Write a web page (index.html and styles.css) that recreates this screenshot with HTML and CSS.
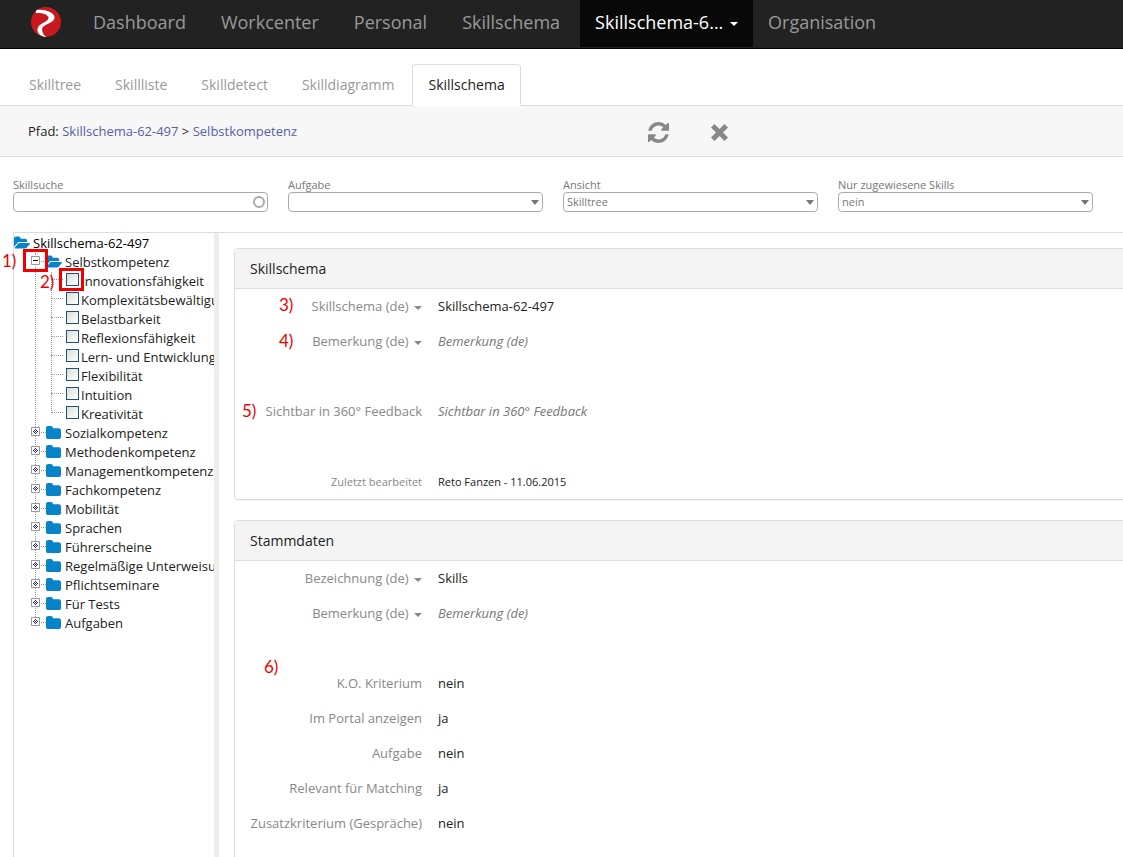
FILE: index.html
```html
<!DOCTYPE html>
<html lang="de">
<head>
    <meta charset="UTF-8">
    <meta name="viewport" content="width=device-width, initial-scale=1.0">
    <title>Skillschema-62-497</title>
    <link rel="stylesheet" href="styles.css">
</head>
<body>
    <!-- Shared icons -->
    <svg class="sprite" aria-hidden="true">
        <symbol id="folder" viewBox="0 128 1664 1408" preserveAspectRatio="none">
            <path d="M1664 608v704q0 92-66 158t-158 66h-1216q-92 0-158-66t-66-158v-960q0-92 66-158t158-66h320q92 0 158 66t66 158v32h672q92 0 158 66t66 158z"/>
        </symbol>
        <symbol id="folder-open" viewBox="0 128 1879 1408">
            <path d="M1879 952q0 31-31 66l-336 396q-43 51-120.500 86.500t-143.500 35.500h-1088q-34 0-60.500-13t-26.500-43q0-31 31-66l336-396q43-51 120.500-86.500t143.500-35.500h1088q34 0 60.500 13t26.500 43zm-343-344v160h-832q-94 0-197 47.500t-164 119.500l-337 396-5 6q0-4-.5-12.500t-.5-12.500v-960q0-92 66-158t158-66h320q92 0 158 66t66 158v32h544q92 0 158 66t66 158z"/>
        </symbol>
        <symbol id="plus" viewBox="0 0 9 9">
            <path fill="#fff" stroke="#999" d="M.5.5h8v8h-8z"/>
            <path fill="#22227a" d="M4 2h1v1H4zM3 3h1v1H3zM5 3h1v1H5zM2 4h1v1H2zM4 4h1v1H4zM6 4h1v1H6zM3 5h1v1H3zM5 5h1v1H5zM4 6h1v1H4z"/>
        </symbol>
        <symbol id="minus" viewBox="0 0 9 9">
            <path fill="#fff" stroke="#999" d="M.5.5h8v8h-8z"/>
            <path fill="#111" d="M2 4h5v1H2z"/>
        </symbol>
    </svg>

    <header class="navbar">
        <a class="brand" href="#" aria-label="Startseite">
            <svg width="30" height="30" viewBox="0 0 30 30">
                <circle cx="15" cy="15" r="15" fill="#c8191e"/>
                <path fill="#fff" d="M5.500 3C13 2 24 5 23.500 11C23 16.500 11.500 17 11 22C11 25 12.500 28 15 30C9 29.500 6 26 6.500 22C7.500 16 17.500 15 17.500 11C17.500 7.500 11 5.500 4.500 6z"/>
            </svg>
        </a>
        <nav class="nav">
            <a href="#">Dashboard</a>
            <a href="#">Workcenter</a>
            <a href="#">Personal</a>
            <a href="#">Skillschema</a>
            <a href="#" class="active">Skillschema-6... <span class="caret"></span></a>
            <a href="#">Organisation</a>
        </nav>
    </header>

    <nav class="tabs">
        <a href="#">Skilltree</a>
        <a href="#">Skillliste</a>
        <a href="#">Skilldetect</a>
        <a href="#">Skilldiagramm</a>
        <a href="#" class="active">Skillschema</a>
    </nav>

    <div class="pathbar">
        <div class="path"><span class="strong">Pfad:</span> <a href="#">Skillschema-62-497</a> &gt; <a href="#">Selbstkompetenz</a></div>
        <div class="actions">
            <button type="button" aria-label="Aktualisieren">
                <svg width="21" height="21" viewBox="0 0 1536 1536"><path d="M1511 928q0 5-1 7-64 268-268 434.500t-478 166.500q-146 0-282.500-55t-243.500-157l-129 129q-19 19-45 19t-45-19-19-45v-448q0-26 19-45t45-19h448q26 0 45 19t19 45-19 45l-137 137q71 66 161 102t187 36q134 0 250-65t186-179q11-17 53-117 8-23 30-23h192q13 0 22.500 9.500t9.500 22.500zm25-800v448q0 26-19 45t-45 19h-448q-26 0-45-19t-19-45 19-45l138-138q-148-137-349-137-134 0-250 65t-186 179q-11 17-53 117-8 23-30 23h-199q-13 0-22.500-9.500t-9.500-22.500v-7q65-268 270-434.500t480-166.500q146 0 284 55.500t245 156.500l130-129q19-19 45-19t45 19 19 45z"/></svg>
            </button>
            <button type="button" aria-label="Schliessen">
                <svg width="17" height="17" viewBox="0 0 17 17"><path d="M3.500 3.500l10 10M13.500 3.500l-10 10" stroke="#888" stroke-width="5" stroke-linecap="square" stroke-linejoin="round"/></svg>
            </button>
        </div>
    </div>

    <form class="filters">
        <div class="filter">
            <label for="search">Skillsuche</label>
            <div class="field search"><input type="text" id="search"></div>
        </div>
        <div class="filter">
            <label for="task">Aufgabe</label>
            <div class="field drop"><select id="task"><option></option></select></div>
        </div>
        <div class="filter">
            <label for="view">Ansicht</label>
            <div class="field drop"><select id="view"><option>Skilltree</option></select></div>
        </div>
        <div class="filter">
            <label for="assigned">Nur zugewiesene Skills</label>
            <div class="field drop"><select id="assigned"><option>nein</option><option>ja</option></select></div>
        </div>
    </form>

    <main class="content">
        <!-- Skill tree -->
        <aside class="tree">
            <div class="root strong"><svg class="open"><use href="#folder-open"/></svg>Skillschema-62-497</div>
            <ul class="groups">
                <li>
                    <div class="node"><svg class="toggle"><use href="#minus"/></svg><svg class="open"><use href="#folder-open"/></svg>Selbstkompetenz</div>
                    <ul class="skills">
                        <li><label><input type="checkbox">Innovationsfähigkeit</label></li>
                        <li><label><input type="checkbox">Komplexitätsbewältigung</label></li>
                        <li><label><input type="checkbox">Belastbarkeit</label></li>
                        <li><label><input type="checkbox">Reflexionsfähigkeit</label></li>
                        <li><label><input type="checkbox">Lern- und Entwicklungsfähigkeit</label></li>
                        <li><label><input type="checkbox">Flexibilität</label></li>
                        <li><label><input type="checkbox">Intuition</label></li>
                        <li><label><input type="checkbox">Kreativität</label></li>
                    </ul>
                </li>
                <li><div class="node"><svg class="toggle"><use href="#plus"/></svg><svg class="closed"><use href="#folder"/></svg>Sozialkompetenz</div></li>
                <li><div class="node"><svg class="toggle"><use href="#plus"/></svg><svg class="closed"><use href="#folder"/></svg>Methodenkompetenz</div></li>
                <li><div class="node"><svg class="toggle"><use href="#plus"/></svg><svg class="closed"><use href="#folder"/></svg>Managementkompetenz</div></li>
                <li><div class="node"><svg class="toggle"><use href="#plus"/></svg><svg class="closed"><use href="#folder"/></svg>Fachkompetenz</div></li>
                <li><div class="node"><svg class="toggle"><use href="#plus"/></svg><svg class="closed"><use href="#folder"/></svg>Mobilität</div></li>
                <li><div class="node"><svg class="toggle"><use href="#plus"/></svg><svg class="closed"><use href="#folder"/></svg>Sprachen</div></li>
                <li><div class="node"><svg class="toggle"><use href="#plus"/></svg><svg class="closed"><use href="#folder"/></svg>Führerscheine</div></li>
                <li><div class="node"><svg class="toggle"><use href="#plus"/></svg><svg class="closed"><use href="#folder"/></svg>Regelmäßige Unterweisungen</div></li>
                <li><div class="node"><svg class="toggle"><use href="#plus"/></svg><svg class="closed"><use href="#folder"/></svg>Pflichtseminare</div></li>
                <li><div class="node"><svg class="toggle"><use href="#plus"/></svg><svg class="closed"><use href="#folder"/></svg>Für Tests</div></li>
                <li><div class="node"><svg class="toggle"><use href="#plus"/></svg><svg class="closed"><use href="#folder"/></svg>Aufgaben</div></li>
            </ul>
        </aside>

        <!-- Details -->
        <div class="details">
            <section class="panel">
                <h2>Skillschema</h2>
                <dl>
                    <div class="row"><dt><button type="button">Skillschema (de) <span class="caret"></span></button></dt><dd>Skillschema-62-497</dd></div>
                    <div class="row tall"><dt><button type="button">Bemerkung (de) <span class="caret"></span></button></dt><dd class="empty">Bemerkung (de)</dd></div>
                    <div class="row tall"><dt>Sichtbar in 360° Feedback</dt><dd class="empty">Sichtbar in 360° Feedback</dd></div>
                    <div class="row small"><dt>Zuletzt bearbeitet</dt><dd>Reto Fanzen - 11.06.2015</dd></div>
                </dl>
            </section>
            <section class="panel">
                <h2>Stammdaten</h2>
                <dl>
                    <div class="row"><dt><button type="button">Bezeichnung (de) <span class="caret"></span></button></dt><dd>Skills</dd></div>
                    <div class="row tall"><dt><button type="button">Bemerkung (de) <span class="caret"></span></button></dt><dd class="empty">Bemerkung (de)</dd></div>
                    <div class="row"><dt>K.O. Kriterium</dt><dd>nein</dd></div>
                    <div class="row"><dt>Im Portal anzeigen</dt><dd>ja</dd></div>
                    <div class="row"><dt>Aufgabe</dt><dd>nein</dd></div>
                    <div class="row"><dt>Relevant für Matching</dt><dd>ja</dd></div>
                    <div class="row tall"><dt>Zusatzkriterium (Gespräche)</dt><dd>nein</dd></div>
                </dl>
            </section>
        </div>

        <!-- Numbered callouts over the content -->
        <span class="frame frame-1"></span>
        <span class="frame frame-2"></span>
        <span class="mark mark-1">1)</span>
        <span class="mark mark-2">2)</span>
        <span class="mark mark-3">3)</span>
        <span class="mark mark-4">4)</span>
        <span class="mark mark-5">5)</span>
        <span class="mark mark-6">6)</span>
    </main>
</body>
</html>
```
FILE: styles.css
```css
*, *::before, *::after {
    box-sizing: border-box;
}
body {
    margin: 0;
    height: 100vh;
    display: flex;
    flex-direction: column;
    overflow: hidden;
    background: #fff;
    color: #222;
    font-family: "Open Sans", sans-serif;
    font-size: 13px;
}
a {
    text-decoration: none;
}
button {
    padding: 0;
    border: none;
    background: none;
    color: inherit;
    font: inherit;
    cursor: pointer;
}
svg {
    display: block;
    flex: none;
}
ul, dl, dd {
    margin: 0;
    padding: 0;
    list-style: none;
}
.sprite {
    position: absolute;
    width: 0;
    height: 0;
}
.strong {
    font-weight: 500;
}
.caret {
    display: inline-block;
    margin-left: 2px;
    vertical-align: middle;
    border: 4px solid transparent;
    border-top-color: currentColor;
    border-bottom: none;
}

/* Top navigation */
.navbar {
    flex: none;
    display: flex;
    height: 49px;
    background: #222;
    border-bottom: 1px solid #000;
}
.brand {
    padding: 7px 17px 0 31px;
}
.nav {
    display: flex;
}
.nav a {
    height: 47px;
    margin-right: 5px;
    padding: 0 15px;
    color: #999;
    font-size: 18px;
    line-height: 45px;
}
.nav .active {
    margin-right: 0;
    background: #080808;
    color: #fff;
}

/* Tabs */
.tabs {
    flex: none;
    display: flex;
    padding: 15px 13px 0;
    border-bottom: 1px solid #ddd;
}
.tabs a {
    height: 42px;
    margin: 0 2px -1px 0;
    padding: 0 15px;
    border: 1px solid transparent;
    border-radius: 4px 4px 0 0;
    color: #999;
    font-size: 14px;
    line-height: 40px;
}
.tabs .active {
    background: #fff;
    border-color: #ddd;
    border-bottom-color: #fff;
    color: #222;
}

/* Path */
.pathbar {
    flex: none;
    display: grid;
    grid-template-columns: 620px 1fr;
    align-items: center;
    height: 51px;
    padding: 0 28px;
    background: #f7f7f7;
    border-bottom: 1px solid #ddd;
}
.path a {
    color: #5560a5;
}
.actions {
    display: flex;
    align-items: center;
    gap: 42px;
    padding-top: 3px;
    fill: #888;
}

/* Filters */
.filters {
    flex: none;
    display: grid;
    grid-template-columns: repeat(4, 1fr);
    gap: 20px;
    padding: 21px 30px 20px 13px;
    color: #777;
    font-size: 11px;
    line-height: 14px;
}
.filter label {
    display: block;
}
.field {
    position: relative;
}
.field input, .field select {
    display: block;
    width: 100%;
    height: 20px;
    padding: 0 20px 0 3px;
    appearance: none;
    border: 1px solid #aaa;
    border-radius: 4px;
    background: #fff;
    color: #777;
    font: inherit;
}
.search::after {
    content: "";
    position: absolute;
    top: 4px;
    right: 3px;
    width: 12px;
    height: 12px;
    border: 2px solid #aaa;
    border-radius: 50%;
}
.drop::after {
    content: "";
    position: absolute;
    top: 8px;
    right: 4px;
    border: 4px solid transparent;
    border-top: 5px solid #777;
    border-bottom: none;
}

/* Content */
.content {
    position: relative;
    flex: 1;
    display: flex;
    min-height: 0;
    margin-left: 13px;
    border-top: 1px solid #ddd;
}
.tree {
    flex: none;
    width: 206px;
    overflow: hidden;
    border-left: 1px solid #ddd;
    border-right: 5px solid #eee;
    line-height: 19px;
    white-space: nowrap;
}
.root, .node {
    display: flex;
    align-items: center;
    height: 19px;
}
.root {
    margin-top: 1px;
    color: #000;
}
.open, .closed {
    height: 13px;
    margin-right: 3px;
    margin-bottom: 3px;
    fill: #0783c9;
}
.open {
    width: 16px;
}
.closed {
    width: 15px;
    margin-right: 4px;
}
.groups {
    position: relative;
}
.groups::before {
    content: "";
    position: absolute;
    top: 0;
    bottom: 12px;
    left: 21px;
    border-left: 1px dotted #999;
}
.node {
    position: relative;
    padding-left: 17px;
}
.node::before {
    content: "";
    position: absolute;
    top: 8px;
    left: 22px;
    width: 10px;
    border-top: 1px dotted #999;
}
.toggle {
    position: relative;
    width: 9px;
    height: 9px;
    margin-right: 6px;
    margin-bottom: 4px;
}
.skills {
    position: relative;
    margin-left: 37px;
}
.skills::before {
    content: "";
    position: absolute;
    top: 0;
    bottom: 11px;
    border-left: 1px dotted #999;
}
.skills label {
    position: relative;
    display: flex;
    height: 19px;
    padding-left: 15px;
}
.skills label::before {
    content: "";
    position: absolute;
    top: 7px;
    left: 0;
    width: 12px;
    border-top: 1px dotted #999;
}
.skills input {
    flex: none;
    width: 13px;
    height: 13px;
    margin: 1px 2px 0 0;
    appearance: none;
    border: 1px solid #1c5180;
    background: linear-gradient(135deg, #dcdcd7, #fff);
}

/* Panels */
.details {
    flex: 1;
    min-width: 0;
    margin-right: -6px;
    padding: 15px 0 0 15px;
}
.panel {
    margin-bottom: 20px;
    border: 1px solid #ddd;
    border-radius: 4px;
    box-shadow: 0 1px 1px rgba(0, 0, 0, 0.05);
}
.panel h2 {
    margin: 0;
    padding: 0 15px;
    background: #f4f4f4;
    border-bottom: 1px solid #ddd;
    border-radius: 3px 3px 0 0;
    font-size: 14px;
    font-weight: normal;
    line-height: 39px;
}
.row {
    display: grid;
    grid-template-columns: 187px 1fr;
    gap: 16px;
    height: 35px;
    line-height: 35px;
}
.row.tall {
    height: 70px;
}
.row.small {
    font-size: 11px;
}
.row dt {
    color: #888;
    text-align: right;
    white-space: nowrap;
}
.row .empty {
    color: #777;
    font-style: italic;
}

/* Callouts */
.mark, .frame {
    position: absolute;
}
.mark {
    color: #e00;
    font-family: Lato, sans-serif;
    font-size: 17px;
    line-height: 20px;
}
.frame {
    width: 25px;
    height: 23px;
    border: 3px solid #e00;
}
.frame-1 { left: 10px; top: 16px; }
.frame-2 { left: 46px; top: 35px; }
.mark-1 { left: -11px; top: 18px; }
.mark-2 { left: 27px; top: 39px; }
.mark-3 { left: 266px; top: 62px; }
.mark-4 { left: 266px; top: 98px; }
.mark-5 { left: 229px; top: 168px; }
.mark-6 { left: 251px; top: 424px; }
```
